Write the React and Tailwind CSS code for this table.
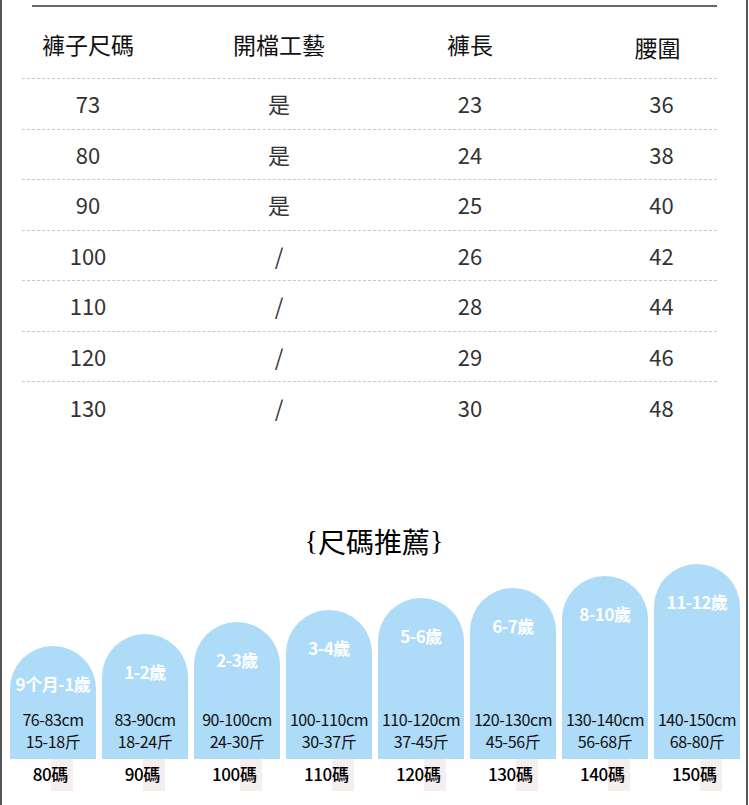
import React from "react"

const rows = [
    ["73", "是", "23", "36"],
    ["80", "是", "24", "38"],
    ["90", "是", "25", "40"],
    ["100", "/", "26", "42"],
    ["110", "/", "28", "44"],
    ["120", "/", "29", "46"],
    ["130", "/", "30", "48"],
]

const sizes = [
    { age: "9个月-1歲", cm: "76-83cm", jin: "15-18斤", size: "80", h: "h-[113px]" },
    { age: "1-2歲", cm: "83-90cm", jin: "18-24斤", size: "90", h: "h-[125px]" },
    { age: "2-3歲", cm: "90-100cm", jin: "24-30斤", size: "100", h: "h-[137px]" },
    { age: "3-4歲", cm: "100-110cm", jin: "30-37斤", size: "110", h: "h-[149px]" },
    { age: "5-6歲", cm: "110-120cm", jin: "37-45斤", size: "120", h: "h-[161px]" },
    { age: "6-7歲", cm: "120-130cm", jin: "45-56斤", size: "130", h: "h-[171px]" },
    { age: "8-10歲", cm: "130-140cm", jin: "56-68斤", size: "140", h: "h-[183px]" },
    { age: "11-12歲", cm: "140-150cm", jin: "68-80斤", size: "150", h: "h-[195px]" },
]

const font = "font-['Noto_Sans_CJK_TC','Noto_Sans',sans-serif]"

function App() {
    return (
        <div className={`w-[748px] h-[805px] bg-white border-x-2 border-[#555] ${font}`}>
            {/* top rule */}
            <div className="pt-[5px]">
                <div className="ml-[30px] w-[685px] h-[2px] bg-[#666]"></div>
            </div>

            {/* size table */}
            <div className="ml-[20px] w-[695px]">
                <div className="grid grid-cols-[132px_250px_132px_181px] h-[72px] pt-[4px] items-center border-b border-dashed border-[#c8c8c8] text-[23px] text-[#111]">
                    <div className="text-center">褲子尺碼</div>
                    <div className="text-center">開檔工藝</div>
                    <div className="text-center">褲長</div>
                    <div className="text-center pl-[62px] pt-[6px]">腰圍</div>
                </div>
                {rows.map((row, i) => (
                    <div
                        key={i}
                        className={`grid grid-cols-[132px_250px_132px_181px] h-[50.5px] items-center text-[22px] text-[#333] ${i < rows.length - 1 ? "border-b border-dashed border-[#c8c8c8]" : ""}`}
                    >
                        <div className="text-center">{row[0]}</div>
                        <div className="text-center">{row[1]}</div>
                        <div className="text-center">{row[2]}</div>
                        <div className="text-center pl-[70px]">{row[3]}</div>
                    </div>
                ))}
            </div>

            {/* title */}
            <div className="mt-[88px] h-[40px] flex items-center justify-center text-[28px] text-black leading-[40px]">
                <span className="font-['Liberation_Serif','Noto_Sans_CJK_TC',serif]">&#123;</span>
                <span>尺碼推薦</span>
                <span className="font-['Liberation_Serif','Noto_Sans_CJK_TC',serif]">&#125;</span>
            </div>

            {/* recommendation cards */}
            <div className="mt-[3px] ml-[8px] flex gap-[6px]">
                {sizes.map((s, i) => (
                    <div key={i} className="w-[86px] flex flex-col">
                        <div className="h-[195px] flex items-end">
                            <div className={`w-full ${s.h} bg-[#aedbf8] rounded-t-[43px] flex flex-col items-center`}>
                                <div className="pt-[26px] leading-[24px] text-[17px] font-bold text-white tracking-tight whitespace-nowrap">
                                    {s.age}
                                </div>
                                <div className="mt-auto pb-[7px] text-center text-[16px] leading-[22px] text-[#111] tracking-tight whitespace-nowrap">
                                    <div>{s.cm}</div>
                                    <div>{s.jin}</div>
                                </div>
                            </div>
                        </div>
                        <div className="flex justify-center items-start text-[17px] leading-[24px] text-black font-medium">
                            <span className="mt-[3px] tracking-tight">{s.size}</span>
                            <span className="bg-[#f5eeec] pt-[3px] pb-[5px] pr-[5px]">碼</span>
                        </div>
                    </div>
                ))}
            </div>
        </div>
    )
}

export default App
